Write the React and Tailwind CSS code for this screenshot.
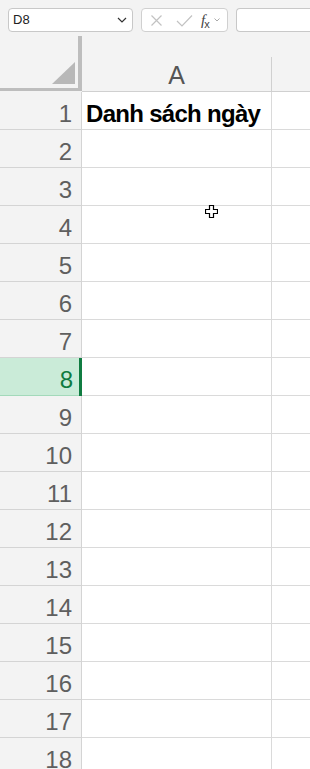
import React from "react";

const rows = Array.from({ length: 18 }, (_, i) => i + 1);

export default function App() {
  const font = { fontFamily: '"Liberation Sans", Arial, sans-serif' };
  return (
    <div className="relative w-[310px] h-[769px] overflow-hidden bg-[#f3f3f3]" style={font}>
      {/* toolbar */}
      <div className="flex items-start h-[36px] pt-[8px] pl-[8px] gap-[8px]">
        <div className="flex items-center justify-between w-[125px] h-[24px] bg-white border border-[#c8c8c8] rounded-[4px] pl-[4px] pr-[4px]">
          <span className="text-[13px] text-[#222]">D8</span>
          <svg width="10" height="6" viewBox="0 0 10 6" className="mr-[1px]">
            <path d="M1 1 L5 5 L9 1" fill="none" stroke="#333" strokeWidth="1.2" />
          </svg>
        </div>
        <div className="flex items-center w-[87px] h-[24px] bg-white border border-[#d0d0d0] rounded-[4px] pl-[8px]">
          <svg width="13" height="13" viewBox="0 0 13 13">
            <path d="M1.5 1.5 L11.5 11.5 M11.5 1.5 L1.5 11.5" stroke="#c2c2c2" strokeWidth="1.2" fill="none" />
          </svg>
          <svg width="17" height="13" viewBox="0 0 17 13" className="ml-[13px]">
            <path d="M1 7 L6 12 L16 1.5" stroke="#c2c2c2" strokeWidth="1.2" fill="none" />
          </svg>
          <span className="ml-[8px] flex items-end leading-none text-[#444]">
            <span className="italic text-[15px]" style={{ fontFamily: '"Liberation Serif", serif' }}>f</span>
            <span className="text-[11px] -ml-[1px] translate-y-[2px]">x</span>
          </span>
          <svg width="6" height="4" viewBox="0 0 6 4" className="ml-[4px]">
            <path d="M0.5 0.5 L3 3 L5.5 0.5" stroke="#aaa" strokeWidth="1" fill="none" />
          </svg>
        </div>
        <div className="flex-1 h-[24px] bg-white border border-[#c8c8c8] rounded-l-[4px] border-r-0" />
      </div>

      {/* column header row */}
      <div className="flex h-[56px]">
        <div className="relative w-[82px] h-[56px] shrink-0">
          <div className="w-[82px] h-[55px] border-r-4 border-b-[3px] border-[#bdbdbd] flex items-end justify-end pr-[3px] pb-[4px]">
            <svg width="23" height="22" viewBox="0 0 23 22">
              <path d="M0 22 L23 22 L23 0 Z" fill="#b8b8b8" />
            </svg>
          </div>
        </div>
        <div className="w-[190px] shrink-0 flex flex-col">
          <div className="h-[21px]" />
          <div className="h-[35px] border-r border-b border-[#d0d0d0] flex items-center justify-center text-[25px] text-[#555] leading-none pt-[2px]">
            A
          </div>
        </div>
        <div className="flex-1 flex flex-col">
          <div className="h-[21px]" />
          <div className="h-[35px] border-b border-[#d0d0d0]" />
        </div>
      </div>

      {/* rows */}
      {rows.map((r) => {
        const sel = r === 8;
        return (
          <div key={r} className="flex h-[38px]">
            <div
              className={
                sel
                  ? "relative w-[82px] shrink-0 h-[38px] bg-[#caebd8] border-b border-[#a3d9ba] flex items-end justify-end pr-[9px] pb-[3px] text-[24px] leading-none text-[#0f7b41]"
                  : "relative w-[82px] shrink-0 h-[38px] bg-[#f3f3f3] border-r border-b border-[#d4d4d4] flex items-end justify-end pr-[9px] pb-[3px] text-[24px] leading-none text-[#5f5f5f]"
              }
            >
              {r}
              {sel && <div className="absolute right-0 top-0 w-[3px] h-[43px] bg-[#107c41]" />}
            </div>
            <div className="w-[190px] shrink-0 h-[38px] bg-white border-r border-b border-[#dadada] flex items-end pl-[4px] pb-[3px]">
              {r === 1 && (
                <span className="text-[24px] font-bold leading-none text-black tracking-[-0.7px]">
                  Danh sách ngày
                </span>
              )}
            </div>
            <div className="flex-1 h-[38px] bg-white border-b border-[#dadada]" />
          </div>
        );
      })}

      {/* mouse cursor */}
      <svg className="absolute left-[205px] top-[205px]" width="13" height="13" viewBox="0 0 13 13">
        <path d="M4.5 0.5 H8.5 V4.5 H12.5 V8.5 H8.5 V12.5 H4.5 V8.5 H0.5 V4.5 H4.5 Z" fill="#fff" stroke="#000" strokeWidth="1.2" />
      </svg>
    </div>
  );
}
